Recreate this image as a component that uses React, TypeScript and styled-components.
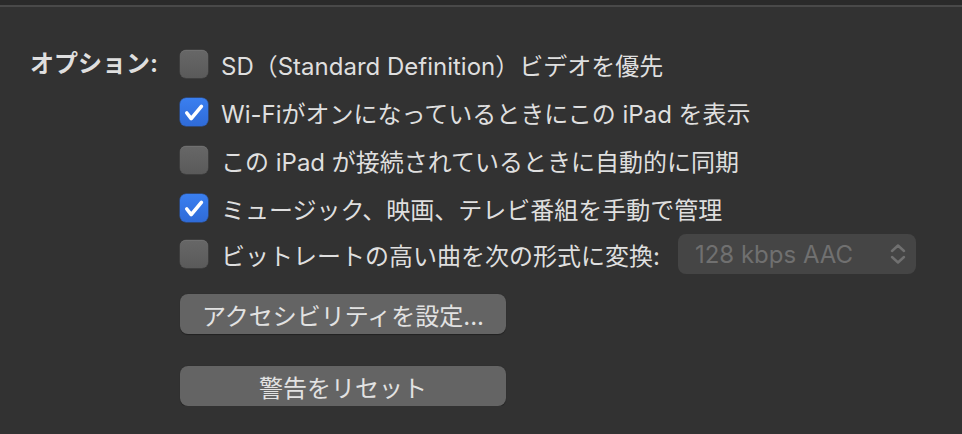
import React from "react";
import styled, { createGlobalStyle } from "styled-components";

const GlobalStyle = createGlobalStyle`
  html, body {
    margin: 0;
    padding: 0;
    background: #323232;
  }
  body {
    font-family: Inter, "Noto Sans CJK JP", sans-serif;
    color: #dfdfdf;
    -webkit-font-smoothing: antialiased;
  }
`;

interface IOption {
  label: string;
  checked: boolean;
}

const options: IOption[] = [
  { label: "SD（Standard Definition）ビデオを優先", checked: false },
  { label: "Wi-Fiがオンになっているときにこの iPad を表示", checked: true },
  { label: "この iPad が接続されているときに自動的に同期", checked: false },
  { label: "ミュージック、映画、テレビ番組を手動で管理", checked: true },
];

const Check = ({ checked }: { checked: boolean }): JSX.Element => (
  <Box checked={checked}>
    {checked && (
      <svg width="28" height="28" viewBox="0 0 28 28">
        <path
          d="M6.8 15 L11.2 20.6 L21.4 8.4"
          fill="none"
          stroke="#ffffff"
          strokeWidth="3.6"
          strokeLinecap="round"
          strokeLinejoin="round"
        />
      </svg>
    )}
  </Box>
);

const App = (): JSX.Element => {
  return (
    <>
      <GlobalStyle />
      <TopBar />
      <Panel>
        <SideLabel>オプション:</SideLabel>
        <Column>
          {options.map((opt, i) => (
            <Row key={i}>
              <Check checked={opt.checked} />
              <RowText>{opt.label}</RowText>
            </Row>
          ))}
          <Row short>
            <Check checked={false} />
            <RowText>ビットレートの高い曲を次の形式に変換:</RowText>
            <Popup>
              <span>128 kbps AAC</span>
              <svg width="18" height="22" viewBox="0 0 18 22">
                <path
                  d="M3 8 L9 2.5 L15 8 M3 14 L9 19.5 L15 14"
                  fill="none"
                  stroke="#707070"
                  strokeWidth="2.4"
                  strokeLinecap="round"
                  strokeLinejoin="round"
                />
              </svg>
            </Popup>
          </Row>
          <Button style={{ marginTop: 18 }}>アクセシビリティを設定...</Button>
          <Button style={{ marginTop: 32 }}>警告をリセット</Button>
        </Column>
      </Panel>
    </>
  );
};

export default App;

const TopBar = styled.div`
  height: 5px;
  background: #2a2a2a;
  border-bottom: 2px solid #494949;
`;

const Panel = styled.div`
  display: grid;
  grid-template-columns: 158px 1fr;
  column-gap: 22px;
  padding-top: 33px;
`;

const SideLabel = styled.div`
  font-size: 24px;
  font-weight: 700;
  text-align: right;
  height: 48px;
  line-height: 48px;
  white-space: nowrap;
`;

const Column = styled.div`
  display: flex;
  flex-direction: column;
  align-items: flex-start;
`;

const Row = styled.div<{ short?: boolean }>`
  display: flex;
  align-items: center;
  gap: 13px;
  height: ${(p) => (p.short ? 44 : 48)}px;
`;

const Box = styled.div<{ checked: boolean }>`
  width: 28px;
  height: 28px;
  box-sizing: border-box;
  border-radius: 6px;
  flex: 0 0 28px;
  background: ${(p) =>
    p.checked
      ? "linear-gradient(#3a7ff0, #2f6bd8)"
      : "linear-gradient(#676767, #5a5a5a)"};
  box-shadow: ${(p) =>
    p.checked ? "0 0 0 0.5px #2a5cb8" : "inset 0 0.5px 0 #7a7a7a, 0 0 0 0.5px #4a4a4a"};
  display: flex;
  align-items: center;
  justify-content: center;
`;

const RowText = styled.span`
  font-size: 24px;
  white-space: nowrap;
`;

const Popup = styled.div`
  margin-left: 5px;
  width: 238px;
  height: 40px;
  box-sizing: border-box;
  border-radius: 8px;
  background: #454545;
  display: flex;
  align-items: center;
  justify-content: space-between;
  padding: 0 9px 0 17px;
  font-size: 24px;
  color: #707070;
`;

const Button = styled.div`
  width: 326px;
  height: 40px;
  border-radius: 8px;
  background: #646464;
  box-shadow: 0 0.5px 1px rgba(0, 0, 0, 0.35);
  display: flex;
  align-items: center;
  justify-content: center;
  font-size: 24px;
  color: #e2e2e2;
`;
